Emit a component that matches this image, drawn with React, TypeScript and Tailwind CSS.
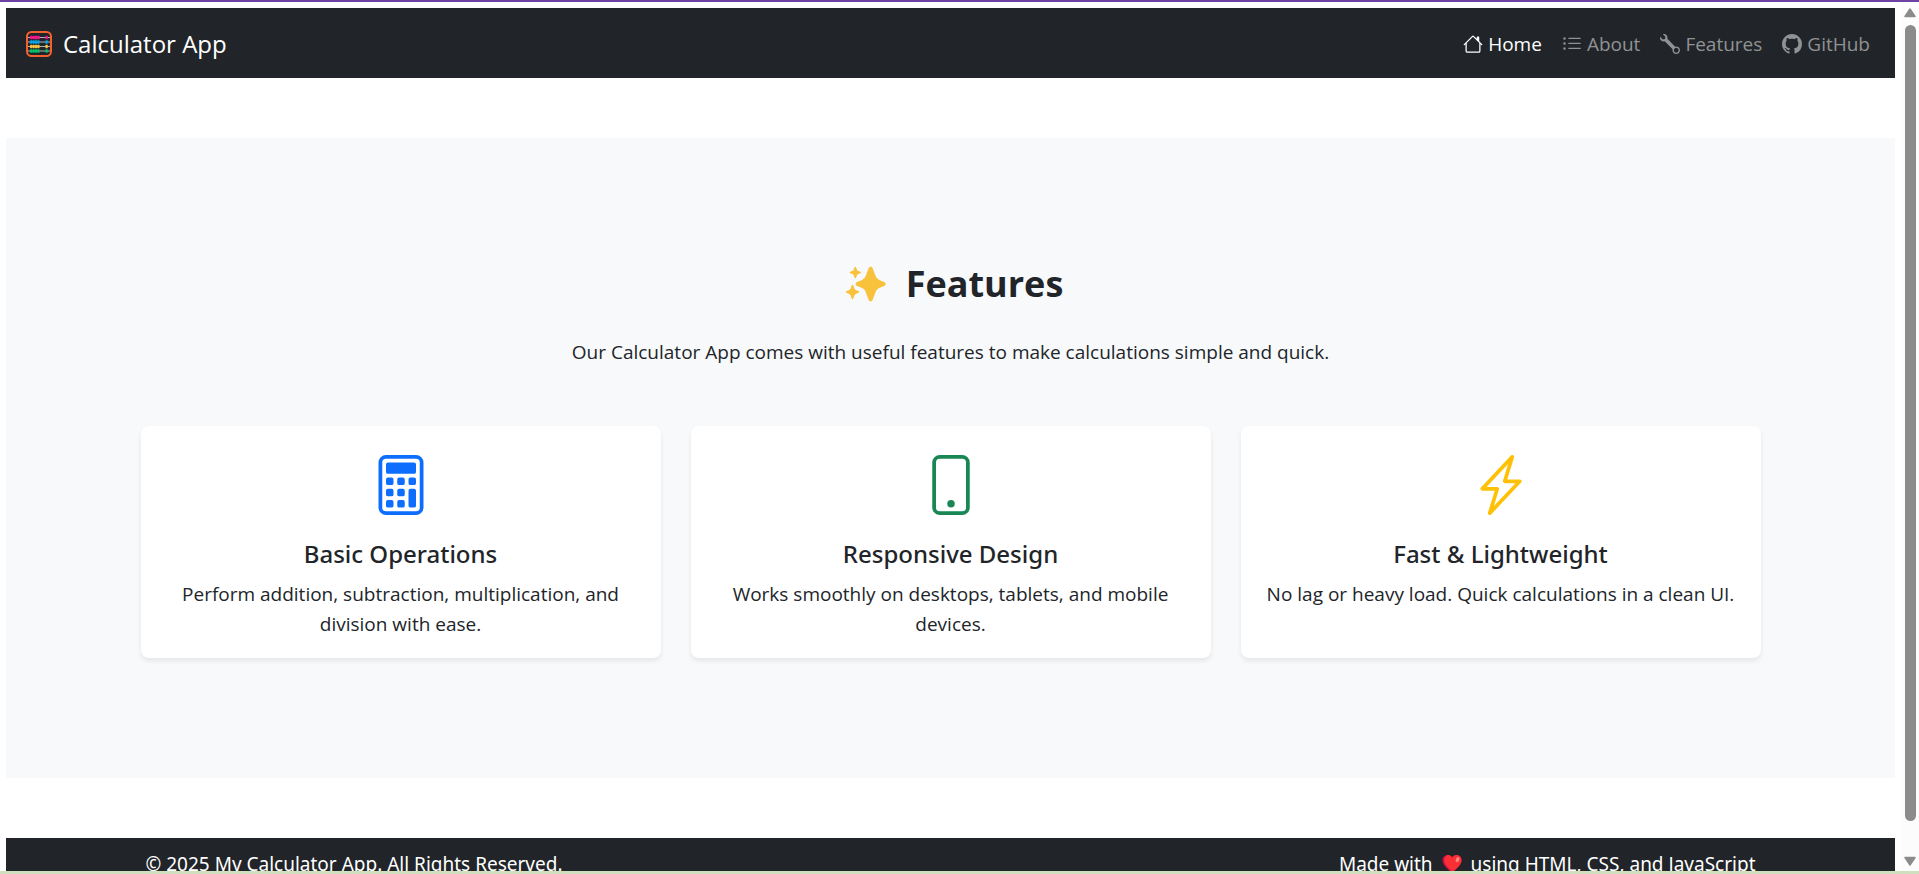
import type { ReactNode } from "react";
import { BsCalculator, BsGithub, BsHouse, BsLightningCharge, BsListUl, BsPhone, BsWrench } from "react-icons/bs";

function AbacusIcon() {
  const rows = [
    { y: 6.5, color: "#f5128c" },
    { y: 11, color: "#00a6ed" },
    { y: 15.5, color: "#f9c23c" },
    { y: 20, color: "#00c465" },
  ];
  return (
    <svg viewBox="0 0 26 26" className="size-[26px]" aria-hidden="true">
      {rows.map((r) => (
        <g key={r.y}>
          <path d={`M2 ${r.y}H24`} stroke="#b0b3b8" strokeWidth="1" />
          {[4, 6.4, 8.8, 11.2, 19.4].map((x) => (
            <rect key={x} x={x} y={r.y - 1.7} width="2.4" height="3.4" rx="0.7" fill={r.color} />
          ))}
        </g>
      ))}
      <rect x="1" y="1" width="24" height="24" rx="4.5" fill="none" stroke="#f3622b" strokeWidth="2" />
    </svg>
  );
}

function SparklesIcon() {
  return (
    <svg viewBox="0 0 40 36" className="h-9 w-10" fill="#f9c23c" aria-hidden="true">
      <path d="M22.6 2.2c.7-2 3.400-2 4.100 0l2.700 7.400c.8 2.200 2.300 3.800 4.400 4.600l4.400 1.700c2 .8 2 3.500 0 4.200l-4.400 1.700c-2.100.8-3.600 2.400-4.400 4.600l-2.700 7.400c-.7 2-3.400 2-4.100 0l-2.700-7.400c-.8-2.200-2.300-3.800-4.400-4.600l-4.400-1.700c-2-.7-2-3.400 0-4.200l4.400-1.700c2.100-.8 3.600-2.400 4.400-4.600z" />
      <path d="M8.600 1.200c.2-.7 1.200-.7 1.400 0l.9 2.200c.3.700.8 1.200 1.500 1.500l2 .8c.7.300.7 1.200 0 1.500l-2 .8c-.7.300-1.200.8-1.500 1.500l-.9 2.200c-.2.700-1.200.7-1.400 0l-.9-2.200c-.3-.7-.8-1.200-1.500-1.500l-2-.8c-.7-.3-.7-1.200 0-1.500l2-.8c.7-.3 1.200-.8 1.500-1.500z" />
      <path d="M5.700 19.300c.3-.8 1.300-.8 1.600 0l1.100 3.100c.3.900.9 1.500 1.800 1.800l2.300.9c.8.300.8 1.400 0 1.700l-2.300.9c-.9.300-1.500.9-1.800 1.800l-1.100 3.100c-.3.800-1.300.8-1.600 0l-1.100-3.100c-.3-.9-.9-1.500-1.800-1.800l-2.300-.9c-.8-.3-.8-1.400 0-1.700l2.300-.9c.9-.3 1.500-.9 1.800-1.800z" />
    </svg>
  );
}

function HeartIcon() {
  return (
    <svg viewBox="0 0 20 20" className="size-5" aria-hidden="true">
      <path d="M5.500 1C2.500 1 .5 3.300.5 6.200c0 5 5 8.800 9.500 12.800 4.500-4 9.500-7.800 9.500-12.800C19.500 3.300 17.500 1 14.500 1 12.500 1 10.900 2 10 3.600 9.100 2 7.500 1 5.500 1z" fill="#ca0b4a" />
      <path d="M6.500 1C4 1 2.200 3.300 2.200 6c0 4.800 4.600 8.200 8.300 12 4.300-3.800 9-7.200 9-11.800C19.500 3.300 17.500 1 14.500 1c-2 0-3.400 1-4.300 2.600C9.400 2 8.300 1 6.500 1z" fill="#f92f35" />
      <ellipse cx="15.600" cy="5.600" rx="1.800" ry="2.700" transform="rotate(25 15.600 5.600)" fill="#fb8580" />
    </svg>
  );
}

const links = [
  { label: "Home", icon: <BsHouse />, active: true },
  { label: "About", icon: <BsListUl />, active: false },
  { label: "Features", icon: <BsWrench />, active: false },
  { label: "GitHub", icon: <BsGithub />, active: false },
];

function Navbar() {
  return (
    <nav className="flex h-[70px] items-center justify-between bg-[#212529] px-5 pt-[2px]">
      <a href="#home" className="flex items-center gap-[11px] text-2xl text-white">
        <AbacusIcon />
        Calculator App
      </a>
      <ul className="flex gap-5 pr-[5px]">
        {links.map((l) => (
          <li key={l.label}>
            <a
              href={`#${l.label.toLowerCase()}`}
              className={`flex items-center gap-[5px] ${l.active ? "text-white" : "text-[#909294]"}`}
            >
              <span className="text-[20px]">{l.icon}</span>
              {l.label}
            </a>
          </li>
        ))}
      </ul>
    </nav>
  );
}

function FeatureCard({ icon, title, children }: { icon: ReactNode; title: string; children: ReactNode }) {
  return (
    <article className="flex flex-col items-center rounded-lg bg-white px-5 pt-[29px] pb-[19px] text-center shadow-[0_3px_5px_rgba(0,0,0,0.075)]">
      {icon}
      <h3 className="mt-6 font-['Noto_Sans',sans-serif] text-2xl leading-[30px] font-medium">{title}</h3>
      <p className="mt-[10px]">{children}</p>
    </article>
  );
}

function Scrollbar() {
  return (
    <div className="flex w-[18px] shrink-0 flex-col items-center bg-[#fcfcfc] pt-[6px] pb-[5px]" aria-hidden="true">
      <svg viewBox="0 0 12 10" className="h-[10px] w-3 shrink-0">
        <path d="M6 1L11 8.500H1z" fill="#8b8b8b" stroke="#8b8b8b" strokeWidth="1.5" strokeLinejoin="round" />
      </svg>
      <div className="mt-[7px] mb-[35px] w-[11px] flex-1 rounded-full bg-[#8b8b8b]" />
      <svg viewBox="0 0 12 10" className="h-[10px] w-3 shrink-0">
        <path d="M6 9L11 1.500H1z" fill="#8b8b8b" stroke="#8b8b8b" strokeWidth="1.5" strokeLinejoin="round" />
      </svg>
    </div>
  );
}

export default function App() {
  return (
    <div className="flex h-screen flex-col border-t-2 border-b-3 border-t-[#6f42a6] border-b-[#d0dfbd] bg-white font-['Open_Sans','Noto_Sans',sans-serif] text-[19px] leading-[30px] text-[#212529]">
      <div className="flex min-h-0 flex-1">
        <div className="min-w-0 flex-1 overflow-hidden pt-[6px] pr-[6px] pl-[6px]">
          <Navbar />
          <main className="my-15 bg-[#f8f9fa] pt-[122px] pb-30">
            <div className="mx-auto max-w-[1650px] px-[15px]">
              <h2 className="flex items-center justify-center gap-5 pl-2 text-[36px] leading-[48px] font-bold">
                <SparklesIcon />
                Features
              </h2>
              <p className="mt-[29px] text-center">
                Our Calculator App comes with useful features to make calculations simple and quick.
              </p>
              <div className="mt-[59px] grid grid-cols-3 gap-[30px]">
                <FeatureCard icon={<BsCalculator className="size-[60px] text-[#0d6efd]" />} title="Basic Operations">
                  Perform addition, subtraction, multiplication, and division with ease.
                </FeatureCard>
                <FeatureCard icon={<BsPhone className="size-[60px] text-[#198754]" />} title="Responsive Design">
                  Works smoothly on desktops, tablets, and mobile devices.
                </FeatureCard>
                <FeatureCard icon={<BsLightningCharge className="size-[60px] text-[#ffc107]" />} title="Fast & Lightweight">
                  No lag or heavy load. Quick calculations in a clean UI.
                </FeatureCard>
              </div>
            </div>
          </main>
          <footer className="bg-[#212529] font-['Noto_Sans',sans-serif] text-white">
            <div className="mx-auto flex max-w-[1650px] justify-between px-5 py-[11px]">
              <p>© 2025 My Calculator App. All Rights Reserved.</p>
              <p className="flex items-center gap-[9px]">
                Made with <HeartIcon /> using HTML, CSS, and JavaScript
              </p>
            </div>
          </footer>
        </div>
        <Scrollbar />
      </div>
    </div>
  );
}
